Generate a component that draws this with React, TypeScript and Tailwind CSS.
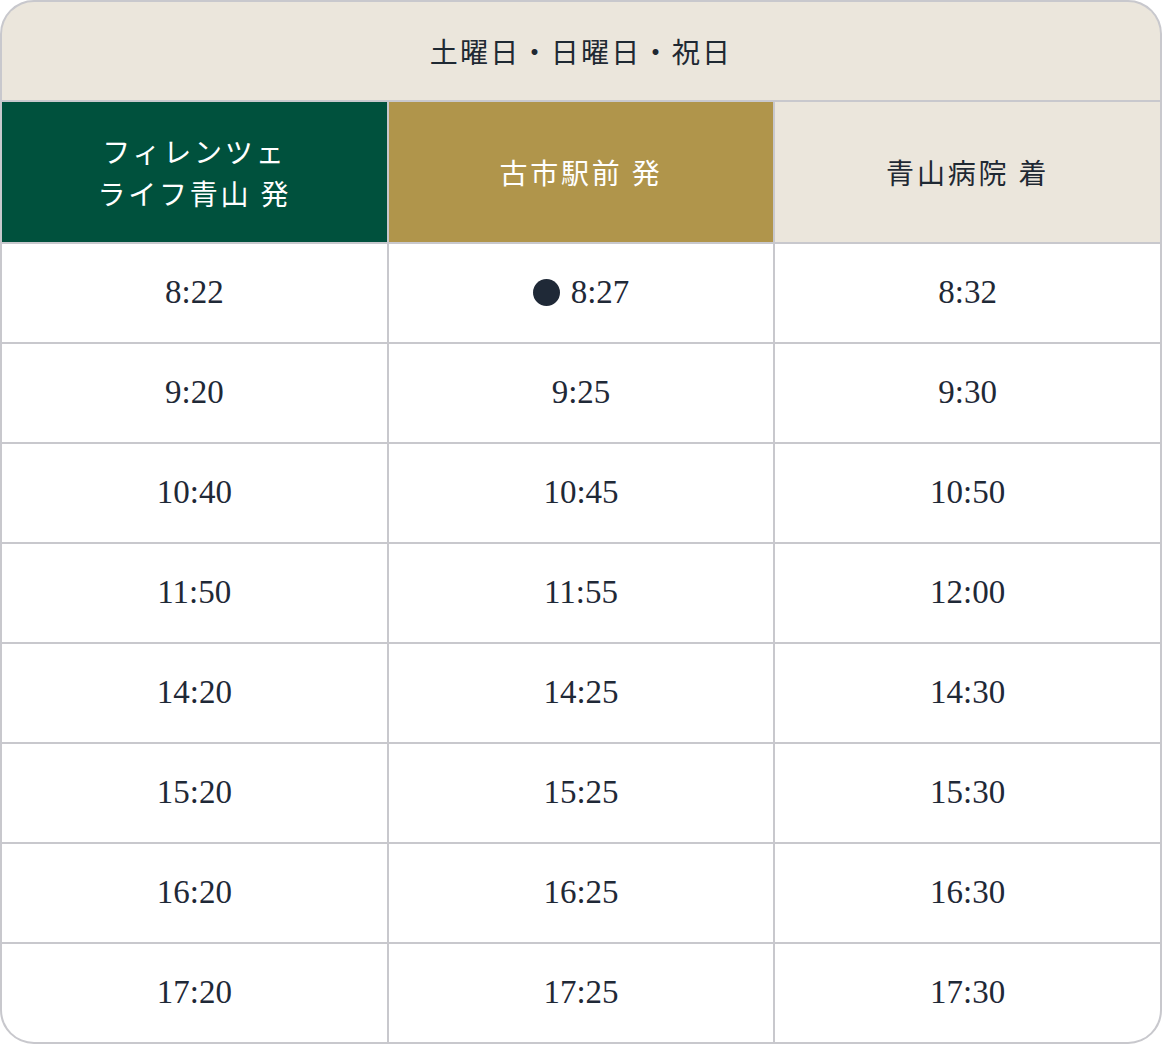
import React from "react";

const rows: [string, string, string][] = [
  ["8:22", "8:27", "8:32"],
  ["9:20", "9:25", "9:30"],
  ["10:40", "10:45", "10:50"],
  ["11:50", "11:55", "12:00"],
  ["14:20", "14:25", "14:30"],
  ["15:20", "15:25", "15:30"],
  ["16:20", "16:25", "16:30"],
  ["17:20", "17:25", "17:30"],
];

const jp = { fontFamily: '"Noto Sans CJK JP", "Liberation Serif", serif' };
const num = { fontFamily: '"Liberation Serif", "Noto Sans CJK JP", serif' };

export default function App() {
  return (
    <div className="w-[1162px] h-[1044px] bg-white">
      <div className="w-full h-full rounded-[34px] border-2 border-[#c8c8cd] bg-[#c8c8cd] overflow-hidden flex flex-col gap-[2px]">
        <div
          className="h-[98px] bg-[#ebe6dc] flex items-center justify-center text-[28px] tracking-[0.08em] text-[#1f2933]"
          style={jp}
        >
          土曜日・日曜日・祝日
        </div>
        <div className="grid grid-cols-3 gap-[2px] h-[140px]">
          <div
            className="bg-[#00513d] text-white flex items-center justify-center text-center text-[28px] leading-[42px] tracking-[0.1em]"
            style={jp}
          >
            <div>
              フィレンツェ
              <br />
              ライフ青山 発
            </div>
          </div>
          <div
            className="bg-[#b0954b] text-white flex items-center justify-center text-[28px] tracking-[0.1em]"
            style={jp}
          >
            古市駅前 発
          </div>
          <div
            className="bg-[#ebe6dc] text-[#1f2933] flex items-center justify-center text-[28px] tracking-[0.1em]"
            style={jp}
          >
            青山病院 着
          </div>
        </div>
        <div className="flex-1 flex flex-col gap-[2px]">
          {rows.map((r, i) => (
            <div key={i} className="grid grid-cols-3 gap-[2px] flex-1">
              {r.map((t, j) => (
                <div
                  key={j}
                  className="bg-white flex items-center justify-center text-[33px] text-[#1f2937]"
                  style={num}
                >
                  {i === 0 && j === 1 ? (
                    <span className="w-[27px] h-[27px] rounded-full bg-[#1f2937] mr-[11px] mt-[-2px]" />
                  ) : null}
                  {t}
                </div>
              ))}
            </div>
          ))}
        </div>
      </div>
    </div>
  );
}
